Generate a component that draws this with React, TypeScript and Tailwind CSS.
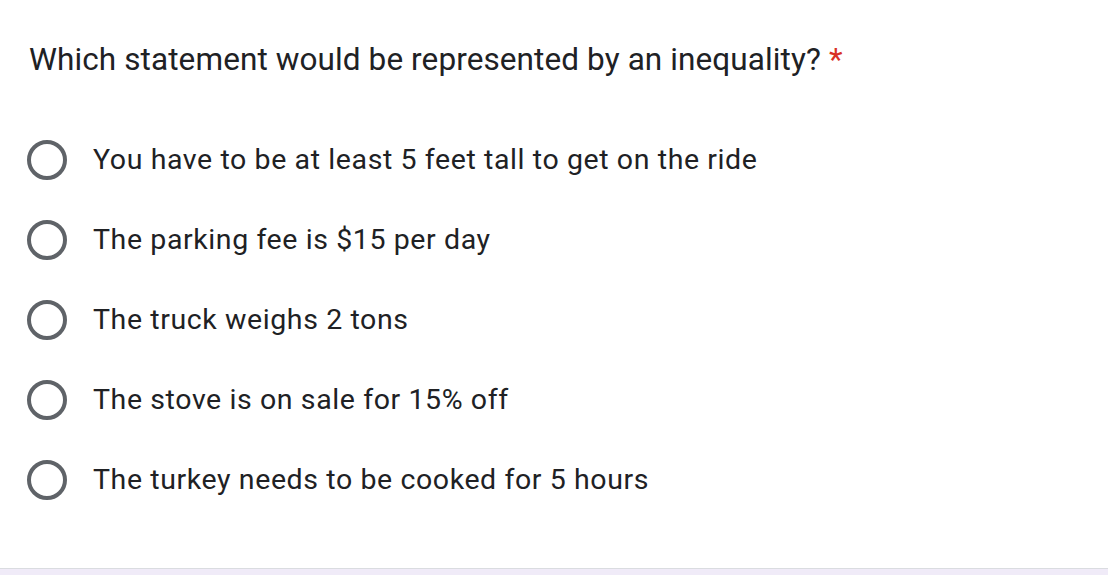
const options = [
  'You have to be at least 5 feet tall to get on the ride',
  'The parking fee is $15 per day',
  'The truck weighs 2 tons',
  'The stove is on sale for 15% off',
  'The turkey needs to be cooked for 5 hours',
]

function Radio() {
  return <span className="block h-[40px] w-[40px] shrink-0 rounded-full border-[4px] border-[#5f6368]" />
}

export default function App() {
  return (
    <div className="flex h-[575px] w-[1108px] flex-col bg-[#f0ebf8] font-['Roboto',sans-serif] text-[#202124]">
      <div className="flex-1 border-b border-[#dadce0] bg-white pt-[38px]">
        <h1 className="pl-[29px] text-[31.5px] leading-[44px] tracking-[0.1px]">
          Which statement would be represented by an inequality? <span className="text-[#d93025]">*</span>
        </h1>
        <div className="mt-[38px] flex flex-col pl-[27px]">
          {options.map((o) => (
            <label key={o} className="flex h-[80px] items-center gap-[26px]">
              <Radio />
              <span className="text-[28.5px] leading-[36px] tracking-[0.6px]">{o}</span>
            </label>
          ))}
        </div>
      </div>
      <div className="h-[6px]" />
    </div>
  )
}
